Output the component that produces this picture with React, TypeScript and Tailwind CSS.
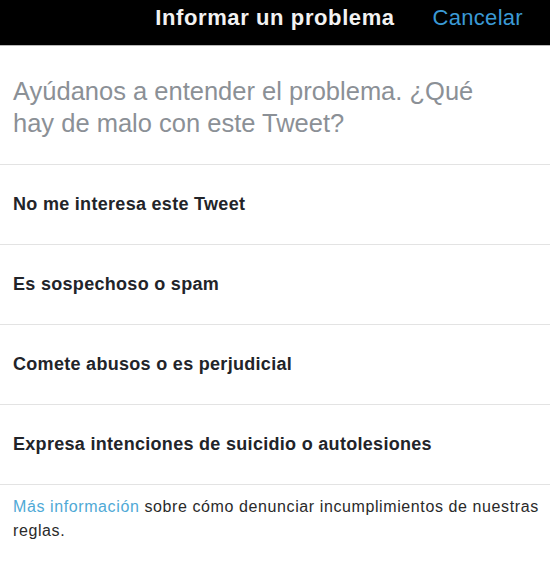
export default function App() {
  const options = [
    "No me interesa este Tweet",
    "Es sospechoso o spam",
    "Comete abusos o es perjudicial",
    "Expresa intenciones de suicidio o autolesiones",
  ];

  return (
    <div className="w-[550px] h-[565px] bg-white font-['Liberation_Sans',Arial,sans-serif] overflow-hidden">
      {/* header */}
      <div className="grid grid-cols-[1fr_auto_1fr] items-center h-[46px] pb-[11px] bg-black border-b border-[#b9b9b9]">
        <div />
        <h1 className="text-[22px] font-bold tracking-[0.6px] text-[#f2f2f2]">Informar un problema</h1>
        <div className="flex justify-end pr-[27px]">
          <span className="text-[22px] tracking-[0.3px] text-[#3b9ad6]">Cancelar</span>
        </div>
      </div>

      <p className="pl-[13px] pt-[29px] pb-[25px] text-[25.5px] leading-[32px] text-[#8b9096] whitespace-nowrap">
        Ayúdanos a entender el problema. ¿Qué
        <br />
        hay de malo con este Tweet?
      </p>

      <ul className="border-t border-[#e3e3e3]">
        {options.map((o) => (
          <li
            key={o}
            className="flex items-center h-[80px] px-[13px] border-b border-[#e3e3e3] text-[18px] tracking-[0.3px] font-bold text-[#222429]"
          >
            {o}
          </li>
        ))}
      </ul>

      <p className="pl-[13px] pr-[8px] pt-[10px] text-[16px] leading-[24px] tracking-[0.6px] text-[#2a2a2a]">
        <span className="text-[#4fa9d6]">Más información</span> sobre cómo denunciar incumplimientos de nuestras reglas.
      </p>
    </div>
  );
}
